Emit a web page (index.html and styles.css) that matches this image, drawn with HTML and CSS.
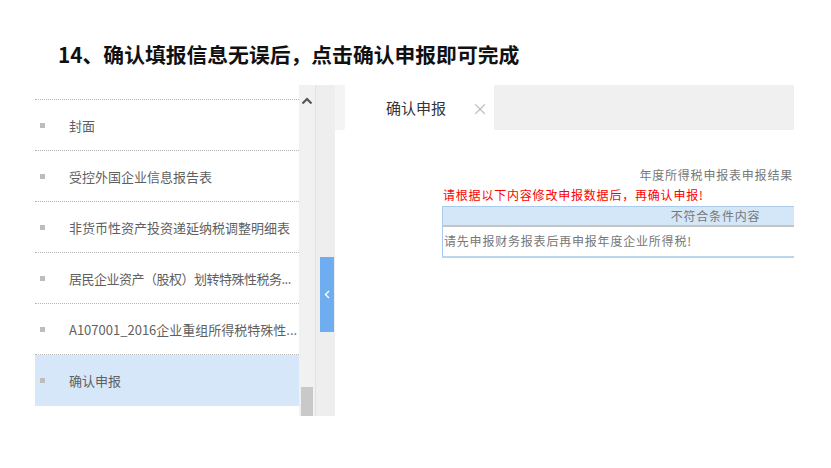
FILE: index.html
```html
<!DOCTYPE html>
<html lang="zh-CN">
<head>
<meta charset="utf-8">
<title>确认申报</title>
<link rel="stylesheet" href="styles.css">
</head>
<body>
<div class="page">
  <h1 class="title">14、确认填报信息无误后，点击确认申报即可完成</h1>
  <div class="app">
    <div class="sidebar">
      <div class="list-top"></div>
      <ul class="menu">
        <li class="item"><span class="dot"></span><span class="label">封面</span></li>
        <li class="item"><span class="dot"></span><span class="label">受控外国企业信息报告表</span></li>
        <li class="item"><span class="dot"></span><span class="label">非货币性资产投资递延纳税调整明细表</span></li>
        <li class="item"><span class="dot"></span><span class="label tight">居民企业资产（股权）划转特殊性税务...</span></li>
        <li class="item"><span class="dot"></span><span class="label">A107001_2016企业重组所得税特殊性...</span></li>
        <li class="item active"><span class="dot"></span><span class="label">确认申报</span></li>
      </ul>
    </div>
    <div class="scrollbar">
      <div class="scroll-up">
        <svg width="12" height="8" viewBox="0 0 12 8"><path d="M1.5 6.5 L6 2 L10.5 6.5" fill="none" stroke="#555" stroke-width="2.2"/></svg>
      </div>
      <div class="scroll-thumb"></div>
    </div>
    <div class="collapse">
      <div class="collapse-btn">
        <svg width="6" height="9" viewBox="0 0 6 9"><path d="M5 1 L1.5 4.5 L5 8" fill="none" stroke="#fff" stroke-width="1.4"/></svg>
      </div>
    </div>
    <div class="panel">
      <div class="tabbar">
        <div class="tab-stub"></div>
        <div class="tab"><span class="tab-title">确认申报</span><span class="tab-close">×</span></div>
        <div class="tab-rest"></div>
      </div>
      <div class="panel-body">
        <div class="result-title">年度所得税申报表申报结果</div>
        <div class="warn">请根据以下内容修改申报数据后，再确认申报!</div>
        <div class="result-table">
          <div class="thead">不符合条件内容</div>
          <div class="trow">请先申报财务报表后再申报年度企业所得税!</div>
        </div>
      </div>
    </div>
  </div>
</div>
</body>
</html>
```
FILE: styles.css
```css
* { box-sizing: border-box; }
html, body { margin: 0; padding: 0; background: #fff; }
body { font-family: "Noto Sans CJK SC", "Noto Sans", sans-serif; width: 831px; height: 468px; overflow: hidden; }
.page { padding: 40px 0 0 35px; }
.title {
  margin: 0 0 16px 23px;
  font-size: 20.8px;
  line-height: 29px;
  height: 29px;
  font-weight: 700;
  color: #111;
  letter-spacing: 0;
  white-space: nowrap;
}
.app { display: flex; height: 331px; }
.sidebar { width: 264px; height: 331px; overflow: hidden; }
.list-top { height: 15px; border-bottom: 1px dotted #b5b5b5; }
.menu { list-style: none; margin: 0; padding: 0; }
.item {
  display: flex; align-items: center;
  height: 51px;
  border-bottom: 1px dotted #b5b5b5;
  font-size: 13px; color: #5f5f5f;
}
.item.active { background: #d6e7fa; border-bottom: none; }
.dot { width: 5px; height: 5px; background: #bdbdbd; margin: 0 24px 0 5px; flex: none; }
.label { flex: 1; min-width: 0; white-space: nowrap; }
.label.tight { letter-spacing: -0.5px; }
.scrollbar {
  width: 16px; background: #f1f1f1;
  display: flex; flex-direction: column; justify-content: space-between; align-items: center;
}
.scroll-up { height: 31px; display: flex; align-items: center; justify-content: center; }
.scroll-thumb { width: 12px; height: 29px; background: #c9c9c9; }
.collapse {
  width: 20px; background: #eeeeee; border-left: 1px solid #e2e2e2;
  display: flex; align-items: flex-start; justify-content: flex-end;
  padding-top: 172px;
}
.collapse-btn {
  width: 14px; height: 75px; margin-right: 1px; background: #6eaef0;
  display: flex; align-items: center; justify-content: center;
}
.panel { width: 459px; overflow: hidden; background: #fff; }
.tabbar { display: flex; height: 45px; }
.tab-stub { width: 10px; flex: none; background: #f4f4f4; border-bottom-right-radius: 2px; }
.tab { width: 149px; flex: none; background: #fff; display: flex; align-items: center; padding-left: 41px; white-space: nowrap; }
.tab-title { font-size: 15px; color: #333; }
.tab-close { margin-left: 26px; font-size: 16px; color: #bbb; }
.tab-rest { flex: 1; background: #f0f0f0; }
.panel-body { padding-top: 38px; font-size: 12px; letter-spacing: 0.8px; }
.result-title { text-align: right; color: #777; line-height: 14px; padding-right: 1px; white-space: nowrap; }
.warn { color: #f00; line-height: 14px; margin-top: 6px; padding-left: 108px; white-space: nowrap; }
.result-table {
  margin: 4px 0 0 107px; width: 546px;
  border-left: 1px solid #a9cbe9; border-top: 1px solid #a9cbe9; border-bottom: 2px solid #bcd6ee;
}
.thead {
  height: 20px; background: #d4e7f8; border-bottom: 2px solid #c4c4c4;
  text-align: center; color: #777; line-height: 18px;
}
.trow { height: 29px; line-height: 28px; color: #777; padding-left: 1px; white-space: nowrap; }
```
